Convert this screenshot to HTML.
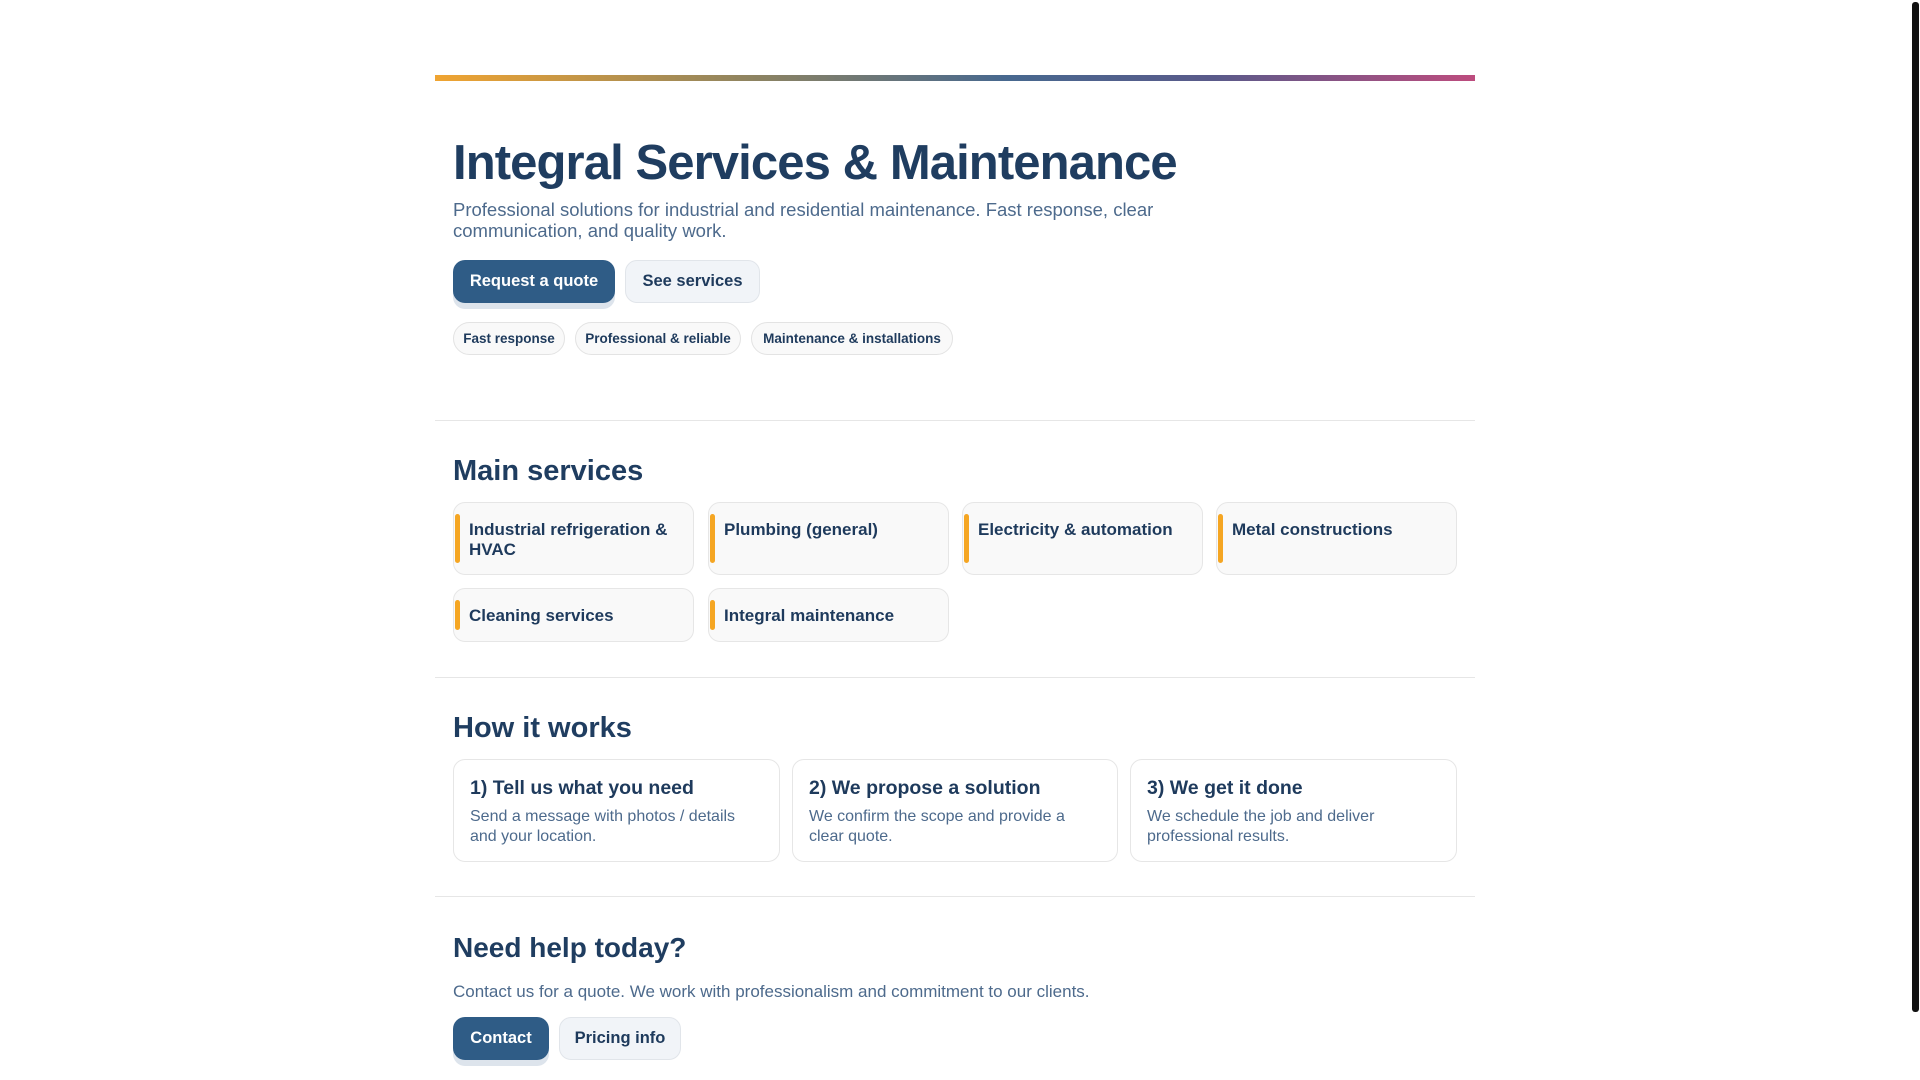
<!DOCTYPE html>
<html><head><meta charset="utf-8"><style>
*{margin:0;padding:0;box-sizing:border-box}
body{width:1920px;height:1080px;overflow:hidden;background:#fff;font-family:"Liberation Sans",Arial,sans-serif;color:#1e3a5c;position:relative}
.a{position:absolute;white-space:nowrap}
.bar{left:435px;top:75px;width:1040px;height:6px;background:linear-gradient(90deg,#f0a431,#8f8460 30%,#47688f 55%,#5a5a8a 75%,#bd4c7e)}
.hr{left:435px;width:1040px;height:1px;background:#e6e6e6}
h1{position:absolute;left:453px;top:135px;font-size:49px;font-weight:700;letter-spacing:-0.9px;color:#1f3d60}
.sub{left:453px;top:199px;font-size:18.5px;line-height:21px;color:#4d6a8c;white-space:normal;width:800px}
.btn{position:absolute;height:43px;border-radius:12px;font-size:16.5px;font-weight:700;display:flex;align-items:center;justify-content:center}
.pri{background:#2f5c86;color:#fff;box-shadow:0 6px 0 #dde4ec}
.sec{background:#f1f4f8;border:1px solid #e1e5ea;color:#1e3a5c}
.chip{position:absolute;top:322px;height:33px;border:1px solid #e3e3e3;background:#f9f9f9;border-radius:17px;font-size:13.5px;font-weight:700;display:flex;align-items:center;justify-content:center;color:#1e3a5c}
h2{position:absolute;left:453px;font-size:29px;font-weight:700;color:#1f3d60}
.card{position:absolute;width:241px;background:#f9f9f9;border:1px solid #e6e6e6;border-radius:12px}
.card i{position:absolute;left:1px;top:11px;bottom:11px;width:5px;border-radius:3px;background:#f5a623}
.card b{position:absolute;left:15px;top:17px;font-size:17px;line-height:20px;color:#1e3a5c;width:210px}
.step{position:absolute;top:759px;height:103px;border:1px solid #e6e6e6;border-radius:12px;background:#fff}
.step b{position:absolute;left:16px;top:17px;font-size:19.5px;color:#1e3a5c;white-space:nowrap}
.step p{position:absolute;left:16px;top:47px;font-size:16px;line-height:20px;color:#4d6a8c;width:290px}
.sb{left:1912px;top:2px;width:7px;height:1010px;background:#111;border-radius:3px}
</style></head><body>
<div class="a bar"></div>
<h1>Integral Services &amp; Maintenance</h1>
<div class="a sub">Professional solutions for industrial and residential maintenance. Fast response, clear communication, and quality work.</div>
<div class="btn pri" style="left:453px;top:260px;width:162px">Request a quote</div>
<div class="btn sec" style="left:625px;top:260px;width:135px">See services</div>
<div class="chip" style="left:453px;width:112px">Fast response</div>
<div class="chip" style="left:575px;width:166px">Professional &amp; reliable</div>
<div class="chip" style="left:751px;width:202px">Maintenance &amp; installations</div>
<div class="a hr" style="top:420px"></div>
<h2 style="top:455px">Main services</h2>
<div class="card" style="left:453px;top:502px;height:73px"><i></i><b style="white-space:normal">Industrial refrigeration &amp; HVAC</b></div>
<div class="card" style="left:708px;top:502px;height:73px"><i></i><b>Plumbing (general)</b></div>
<div class="card" style="left:962px;top:502px;height:73px"><i></i><b>Electricity &amp; automation</b></div>
<div class="card" style="left:1216px;top:502px;height:73px"><i></i><b>Metal constructions</b></div>
<div class="card" style="left:453px;top:588px;height:54px"><i></i><b>Cleaning services</b></div>
<div class="card" style="left:708px;top:588px;height:54px"><i></i><b>Integral maintenance</b></div>
<div class="a hr" style="top:677px"></div>
<h2 style="top:712px">How it works</h2>
<div class="step" style="left:453px;width:327px"><b>1) Tell us what you need</b><p>Send a message with photos / details and your location.</p></div>
<div class="step" style="left:792px;width:326px"><b>2) We propose a solution</b><p>We confirm the scope and provide a clear quote.</p></div>
<div class="step" style="left:1130px;width:327px"><b>3) We get it done</b><p>We schedule the job and deliver professional results.</p></div>
<div class="a hr" style="top:896px"></div>
<h2 style="top:932px;font-size:28px">Need help today?</h2>
<div class="a" style="left:453px;top:982px;font-size:17px;color:#4d6a8c">Contact us for a quote. We work with professionalism and commitment to our clients.</div>
<div class="btn pri" style="left:453px;top:1017px;width:96px">Contact</div>
<div class="btn sec" style="left:559px;top:1017px;width:122px">Pricing info</div>
<div class="a sb"></div>
</body></html>
